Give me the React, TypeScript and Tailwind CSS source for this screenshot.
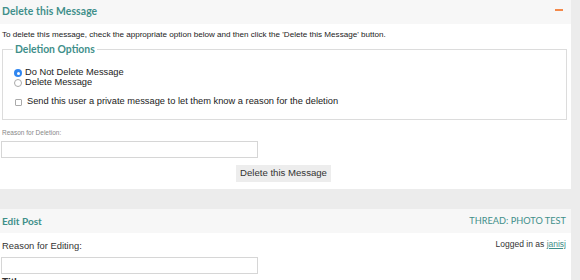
export default function App() {
  const body = { fontFamily: '"Liberation Sans", Arial, sans-serif' };
  const head = { fontFamily: 'Lato, "Open Sans", sans-serif' };
  return (
    <div className="w-[580px] h-[280px] overflow-hidden bg-[#ececec] text-[#333]" style={body}>
      <div className="w-[571px]">
        {/* Delete panel */}
        <div className="h-[24px] bg-[#f7f7f7] flex items-center justify-between pl-[2px] pr-[8px]">
          <span className="text-[10.4px] font-bold text-[#3f8f8a] tracking-[0.1px]" style={head}>Delete this Message</span>
          <span className="block w-[8px] h-[2px] bg-[#f4894a] mb-[4px]" />
        </div>
        <div className="bg-white h-[165px] pt-[5px]">
          <p className="text-[8.1px] leading-[11px] pl-[2px] text-[#222]">
            To delete this message, check the appropriate option below and then click the 'Delete this Message' button.
          </p>
          <fieldset className="ml-[2px] w-[565px] mt-[2px] border border-[#dcdcdc] pl-[11px] pb-[12px]">
            <legend className="px-[2px] -ml-[1px] text-[10.4px] font-bold text-[#3f8f8a] leading-[14px]" style={head}>Deletion Options</legend>
            <div className="flex flex-col text-[9.3px] text-[#222] mt-[12px]">
              <label className="flex items-center h-[10px]">
                <span className="w-[8px] h-[8px] rounded-full bg-[#2f86f0] flex items-center justify-center">
                  <span className="w-[3px] h-[3px] rounded-full bg-white" />
                </span>
                <span className="ml-[3px]">Do Not Delete Message</span>
              </label>
              <label className="flex items-center h-[10px]">
                <span className="w-[8px] h-[8px] rounded-full border border-[#aaa] bg-white" />
                <span className="ml-[3px]">Delete Message</span>
              </label>
              <label className="flex items-center h-[10px] mt-[9px]">
                <span className="ml-[1px] w-[7px] h-[7px] rounded-[1px] border border-[#aaa] bg-white" />
                <span className="ml-[5px]">Send this user a private message to let them know a reason for the deletion</span>
              </label>
            </div>
          </fieldset>
          <div className="pl-[2px] mt-[8px] text-[6.5px] text-[#888] leading-[9px]">Reason for Deletion:</div>
          <div className="ml-[1px] mt-[4px] w-[257px] h-[17px] border border-[#d6d6d6] bg-white" />
          <div className="flex mt-[7px] pl-[236px]">
            <div className="w-[95px] h-[17px] bg-[#ededed] flex items-center justify-center text-[9.6px] text-[#333]">Delete this Message</div>
          </div>
        </div>
        <div className="h-[20px]" />
        {/* Edit panel */}
        <div className="h-[24px] bg-[#f7f7f7] flex items-center justify-between pl-[2px] pr-[5px]">
          <span className="text-[10px] font-bold text-[#3f8f8a]" style={head}>Edit Post</span>
          <span className="text-[9.2px] text-[#3f8f8a]" style={head}>THREAD: PHOTO TEST</span>
        </div>
        <div className="bg-white h-[60px] pt-[7px]">
          <div className="flex justify-between pl-[2px] pr-[5px]">
            <span className="text-[9.4px] leading-[12px] text-[#333]">Reason for Editing:</span>
            <span className="text-[8.5px] leading-[12px] -mt-[2px] text-[#333]">
              Logged in as <span className="text-[#3f8f8a] underline">janisj</span>
            </span>
          </div>
          <div className="ml-[1px] mt-[5px] w-[257px] h-[17px] border border-[#d6d6d6] bg-white" />
          <div className="pl-[2px] mt-[3px] text-[10px] leading-[12px] font-bold text-[#333]">Title</div>
        </div>
      </div>
    </div>
  );
}
